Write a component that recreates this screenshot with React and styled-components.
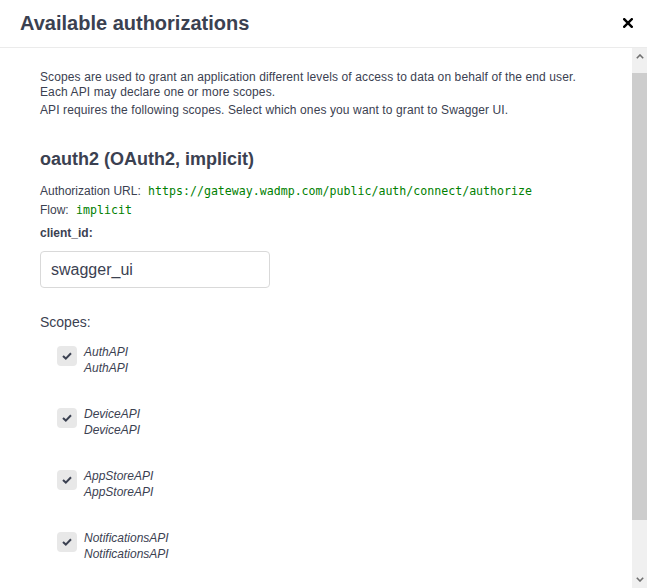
import React from "react";
import styled, { createGlobalStyle } from "styled-components";

const Global = createGlobalStyle`
  html, body { margin: 0; padding: 0; background: #fff; }
  body { font-family: "Liberation Sans", Arial, sans-serif; color: #3b4151; }
  * { box-sizing: border-box; }
`;

const Modal = styled.div`
  width: 647px;
  height: 588px;
  display: flex;
  flex-direction: column;
  background: #fff;
  overflow: hidden;
`;

const Header = styled.div`
  height: 48px;
  flex: none;
  display: flex;
  align-items: center;
  justify-content: space-between;
  padding: 0 14px 2px 20px;
  border-bottom: 1px solid #ebebeb;
`;

const Title = styled.h3`
  margin: 0;
  font-size: 20px;
  font-weight: 700;
  color: #3b4151;
  line-height: 24px;
`;

const CloseBtn = styled.button`
  border: 0;
  background: none;
  padding: 0;
  width: 10px;
  height: 10px;
  display: flex;
  cursor: pointer;
`;

const Body = styled.div`
  flex: 1;
  min-height: 0;
  display: flex;
`;

const Content = styled.div`
  flex: 1;
  min-width: 0;
  overflow: hidden;
  padding: 22px 20px 0 40px;
`;

const ScrollBar = styled.div`
  width: 15px;
  flex: none;
  display: flex;
  flex-direction: column;
  background: #f0f0f0;
`;

const ScrollButton = styled.div`
  height: 17px;
  flex: none;
  display: flex;
  align-items: center;
  justify-content: center;
`;

const ScrollTrack = styled.div`
  flex: 1;
  display: flex;
  flex-direction: column;
`;

const ScrollThumb = styled.div`
  background: #cdcdcd;
  flex: none;
`;

const Intro = styled.p`
  margin: 0 0 ${(p) => p.$mb || 0}px;
  font-size: 12px;
  line-height: 15px;
  letter-spacing: 0.11px;
  max-width: 570px;
`;

const Heading = styled.h4`
  margin: 31px 0 15px;
  font-size: 18px;
  line-height: 20px;
  font-weight: 700;
  color: #3b4151;
`;

const InfoRow = styled.p`
  margin: 0 0 4px;
  font-size: 12px;
  line-height: 15px;
`;

const Code = styled.code`
  font-family: "DejaVu Sans Mono", monospace;
  font-size: 11.6px;
  color: #008000;
  padding: 0 4px;
`;

const FieldLabel = styled.label`
  display: block;
  margin-top: 8px;
  font-size: 12px;
  font-weight: 700;
  line-height: 15px;
`;

const TextInput = styled.input`
  display: block;
  margin-top: 10px;
  width: 230px;
  height: 37px;
  padding: 0 10px;
  border: 1px solid #d9d9d9;
  border-radius: 4px;
  font-family: "Liberation Sans", Arial, sans-serif;
  font-size: 16px;
  color: #3b4151;
  background: #fff;
  outline: none;
`;

const ScopesLabel = styled.p`
  margin: 26px 0 0;
  font-size: 14px;
  line-height: 17px;
`;

const ScopeList = styled.div`
  display: flex;
  flex-direction: column;
  gap: 30px;
  margin-top: 13px;
  padding-left: 17px;
`;

const ScopeRow = styled.div`
  display: flex;
  align-items: flex-start;
  gap: 7px;
`;

const CheckBox = styled.span`
  width: 20px;
  height: 20px;
  margin-top: 2px;
  flex: none;
  border-radius: 4px;
  background: #e8e8e8;
  display: flex;
  align-items: center;
  justify-content: center;
`;

const ScopeText = styled.div`
  font-size: 12px;
  line-height: 16px;
  font-style: italic;
  color: #3b4151;
`;

const scopes = ["AuthAPI", "DeviceAPI", "AppStoreAPI", "NotificationsAPI"];

const Chevron = ({ down }) => (
  <svg width="8" height="5" viewBox="0 0 8 5">
    <path
      d={down ? "M0.8 0.8 L4 4 L7.2 0.8" : "M0.8 4.2 L4 1 L7.2 4.2"}
      fill="none"
      stroke="#707070"
      strokeWidth="1.6"
    />
  </svg>
);

export default function App() {
  const thumb = { offset: 8, size: 447 };
  return (
    <>
      <Global />
      <Modal>
        <Header>
          <Title>Available authorizations</Title>
          <CloseBtn aria-label="Close">
            <svg width="10" height="10" viewBox="0 0 10 10">
              <path d="M1.2 1.2 L8.8 8.8 M8.8 1.2 L1.2 8.8" stroke="#000" strokeWidth="2.4" strokeLinecap="square" />
            </svg>
          </CloseBtn>
        </Header>
        <Body>
          <Content>
            <Intro $mb={3}>
              Scopes are used to grant an application different levels of access to data on behalf of the end user.
              <br />
              Each API may declare one or more scopes.
            </Intro>
            <Intro>API requires the following scopes. Select which ones you want to grant to Swagger UI.</Intro>
            <Heading>oauth2 (OAuth2, implicit)</Heading>
            <InfoRow>
              Authorization URL: <Code>https://gateway.wadmp.com/public/auth/connect/authorize</Code>
            </InfoRow>
            <InfoRow>
              Flow: <Code>implicit</Code>
            </InfoRow>
            <FieldLabel htmlFor="client_id">client_id:</FieldLabel>
            <TextInput id="client_id" defaultValue="swagger_ui" />
            <ScopesLabel>Scopes:</ScopesLabel>
            <ScopeList>
              {scopes.map((s) => (
                <ScopeRow key={s}>
                  <CheckBox>
                    <svg width="10" height="8" viewBox="0 0 10 8">
                      <path d="M1 4 L3.8 6.6 L9 1.2" fill="none" stroke="#3b4151" strokeWidth="2" />
                    </svg>
                  </CheckBox>
                  <ScopeText>
                    {s}
                    <br />
                    {s}
                  </ScopeText>
                </ScopeRow>
              ))}
            </ScopeList>
          </Content>
          <ScrollBar aria-hidden="true">
            <ScrollButton>
              <Chevron />
            </ScrollButton>
            <ScrollTrack>
              <ScrollThumb style={{ marginTop: thumb.offset, height: thumb.size }} />
            </ScrollTrack>
            <ScrollButton>
              <Chevron down />
            </ScrollButton>
          </ScrollBar>
        </Body>
      </Modal>
    </>
  );
}
